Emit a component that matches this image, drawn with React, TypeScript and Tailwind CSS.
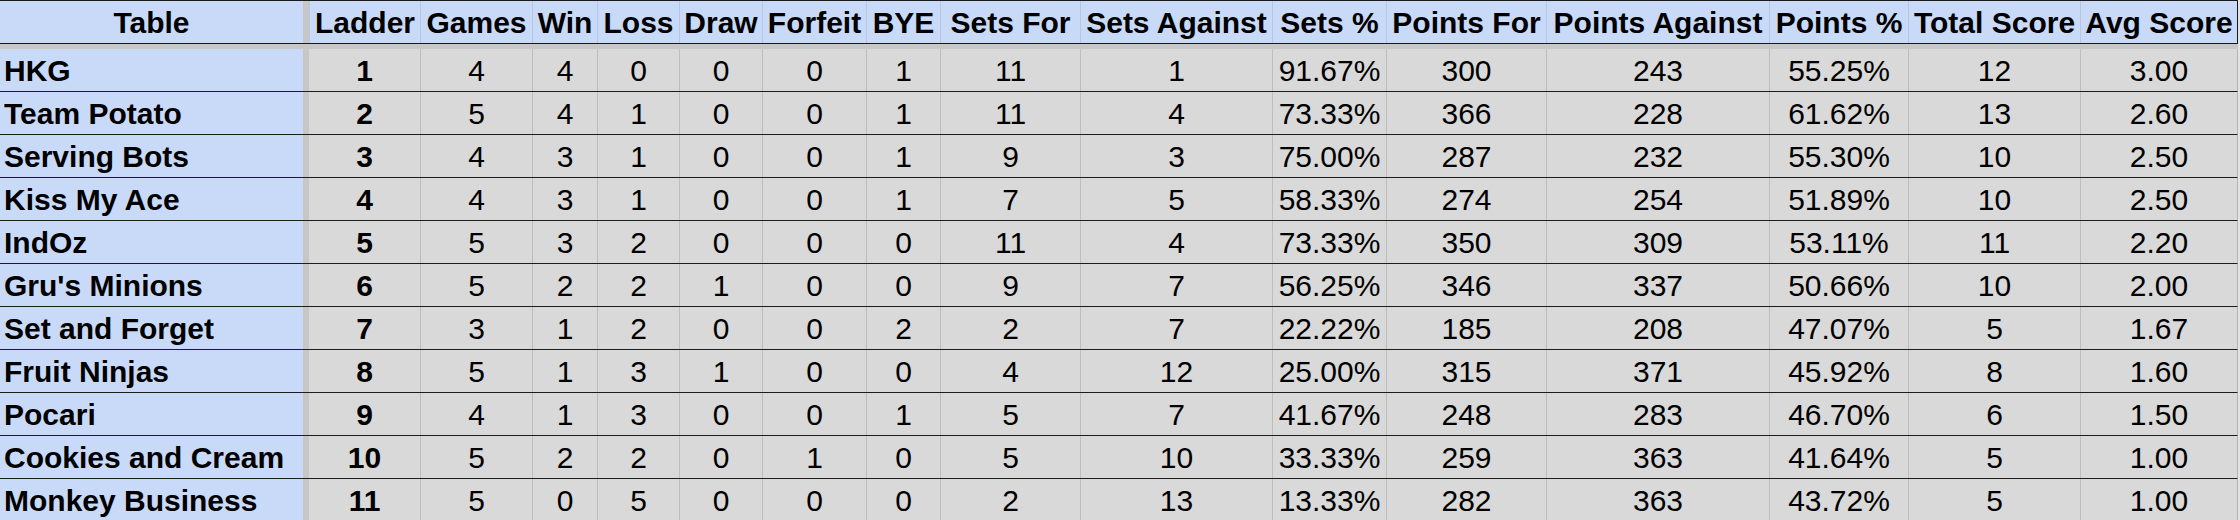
const columns = [
  { label: "Ladder", w: "w-[111px]" },
  { label: "Games", w: "w-[112px]" },
  { label: "Win", w: "w-[65px]" },
  { label: "Loss", w: "w-[82px]" },
  { label: "Draw", w: "w-[83px]" },
  { label: "Forfeit", w: "w-[104px]" },
  { label: "BYE", w: "w-[74px]" },
  { label: "Sets For", w: "w-[140px]" },
  { label: "Sets Against", w: "w-[192px]" },
  { label: "Sets %", w: "w-[114px]" },
  { label: "Points For", w: "w-[160px]" },
  { label: "Points Against", w: "w-[223px]" },
  { label: "Points %", w: "w-[139px]" },
  { label: "Total Score", w: "w-[172px]" },
  { label: "Avg Score", w: "w-[157px]" },
];

const teams: [string, ...string[]][] = [
  ["HKG", "1", "4", "4", "0", "0", "0", "1", "11", "1", "91.67%", "300", "243", "55.25%", "12", "3.00"],
  ["Team Potato", "2", "5", "4", "1", "0", "0", "1", "11", "4", "73.33%", "366", "228", "61.62%", "13", "2.60"],
  ["Serving Bots", "3", "4", "3", "1", "0", "0", "1", "9", "3", "75.00%", "287", "232", "55.30%", "10", "2.50"],
  ["Kiss My Ace", "4", "4", "3", "1", "0", "0", "1", "7", "5", "58.33%", "274", "254", "51.89%", "10", "2.50"],
  ["IndOz", "5", "5", "3", "2", "0", "0", "0", "11", "4", "73.33%", "350", "309", "53.11%", "11", "2.20"],
  ["Gru's Minions", "6", "5", "2", "2", "1", "0", "0", "9", "7", "56.25%", "346", "337", "50.66%", "10", "2.00"],
  ["Set and Forget", "7", "3", "1", "2", "0", "0", "2", "2", "7", "22.22%", "185", "208", "47.07%", "5", "1.67"],
  ["Fruit Ninjas", "8", "5", "1", "3", "1", "0", "0", "4", "12", "25.00%", "315", "371", "45.92%", "8", "1.60"],
  ["Pocari", "9", "4", "1", "3", "0", "0", "1", "5", "7", "41.67%", "248", "283", "46.70%", "6", "1.50"],
  ["Cookies and Cream", "10", "5", "2", "2", "0", "1", "0", "5", "10", "33.33%", "259", "363", "41.64%", "5", "1.00"],
  ["Monkey Business", "11", "5", "0", "5", "0", "0", "0", "2", "13", "13.33%", "282", "363", "43.72%", "5", "1.00"],
];

export default function App() {
  return (
    <div className="w-[2240px] h-[520px] overflow-hidden bg-[#e3e3e3] text-black text-[30px] font-['Liberation_Sans',Arial,sans-serif]">
      {/* header */}
      <div className="flex h-[44px] border-t border-b border-[#1a1a1a] w-[2238px] border-r bg-[#c9daf8] font-bold">
        <div className="w-[303px] flex items-center justify-center">Table</div>
        <div className="w-[6px] bg-[#c7c7c7]" />
        {columns.map((c) => (
          <div key={c.label} className={`${c.w} flex items-center justify-center border-l border-[#b9c7de] whitespace-nowrap`}>
            {c.label}
          </div>
        ))}
      </div>
      {/* frozen row divider */}
      <div className="h-[5px] w-[2238px] bg-[#c7c7c7]" />

      {teams.map(([name, ladder, ...rest]) => (
        <div key={name} className="flex h-[43px] w-[2238px] border-b border-[#1e1e1e] border-r border-r-[#b5b5b5] bg-[#d9d9d9]">
          <div className="w-[303px] bg-[#c9daf8] flex items-center pl-[4px] font-bold whitespace-nowrap">{name}</div>
          <div className="w-[6px] bg-[#c7c7c7]" />
          <div className="w-[111px] flex items-center justify-center font-bold">{ladder}</div>
          {rest.map((v, i) => (
            <div key={i} className={`${columns[i + 1].w} flex items-center justify-center border-l border-[#bdbdbd]`}>
              {v}
            </div>
          ))}
        </div>
      ))}
    </div>
  );
}
